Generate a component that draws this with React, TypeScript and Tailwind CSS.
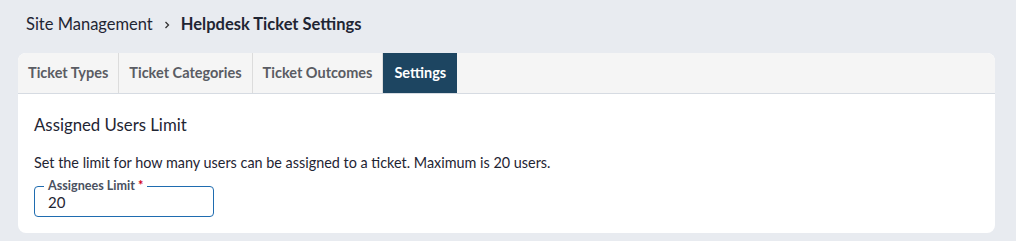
import React from "react";

export default function App() {
  const tabs = ["Ticket Types", "Ticket Categories", "Ticket Outcomes", "Settings"];
  return (
    <div className="w-[1016px] h-[241px] bg-[#e8ebf0] overflow-hidden" style={{ fontFamily: 'Lato, sans-serif' }}>
      <div className="pl-[26px] pt-[13px] h-[53px] flex items-start">
        <div className="flex items-center text-[16.5px] leading-[22px] text-[#1f2533]">
          <span>Site Management</span>
          <svg width="10" height="10" viewBox="0 0 10 10" className="mx-[9px] mt-[2px]">
            <path d="M3.5 2 L6.5 5 L3.5 8" fill="none" stroke="#333" strokeWidth="1.3" />
          </svg>
          <span className="font-bold">Helpdesk Ticket Settings</span>
        </div>
      </div>
      <div className="ml-[18px] w-[977px] h-[180px] bg-white rounded-[8px] overflow-hidden">
        <div className="h-[41px] bg-[#f5f5f5] border-b border-[#d6dbe2] flex">
          {tabs.map((t, i) => (
            <div
              key={t}
              className={
                i === 3
                  ? "h-[40px] px-[11px] flex items-center bg-[#1d4561] text-white font-bold text-[14.5px]"
                  : "h-[40px] px-[10px] flex items-center text-[#5a5c63] font-bold text-[14.5px] border-r border-[#dcdcdc]"
              }
            >
              {t}
            </div>
          ))}
        </div>
        <div className="px-[16px] pt-[19px]">
          <div className="text-[16.8px] leading-[24px] text-[#1f2533]">Assigned Users Limit</div>
          <div className="mt-[16px] text-[14.4px] leading-[20px] text-[#1f2533]">
            Set the limit for how many users can be assigned to a ticket. Maximum is 20 users.
          </div>
          <div className="relative mt-[13px] w-[180px] h-[31px] border border-[#1f6cb0] rounded-[4px]">
            <div className="absolute left-[9px] top-[-9px] px-[4px] bg-white text-[12.6px] leading-[16px] font-bold text-[#4a5160]">
              Assignees Limit <span className="text-[#d0021b]">*</span>
            </div>
            <div className="pl-[13px] pt-[5px] text-[15px] leading-[20px] text-[#1f2533]">20</div>
          </div>
        </div>
      </div>
    </div>
  );
}
